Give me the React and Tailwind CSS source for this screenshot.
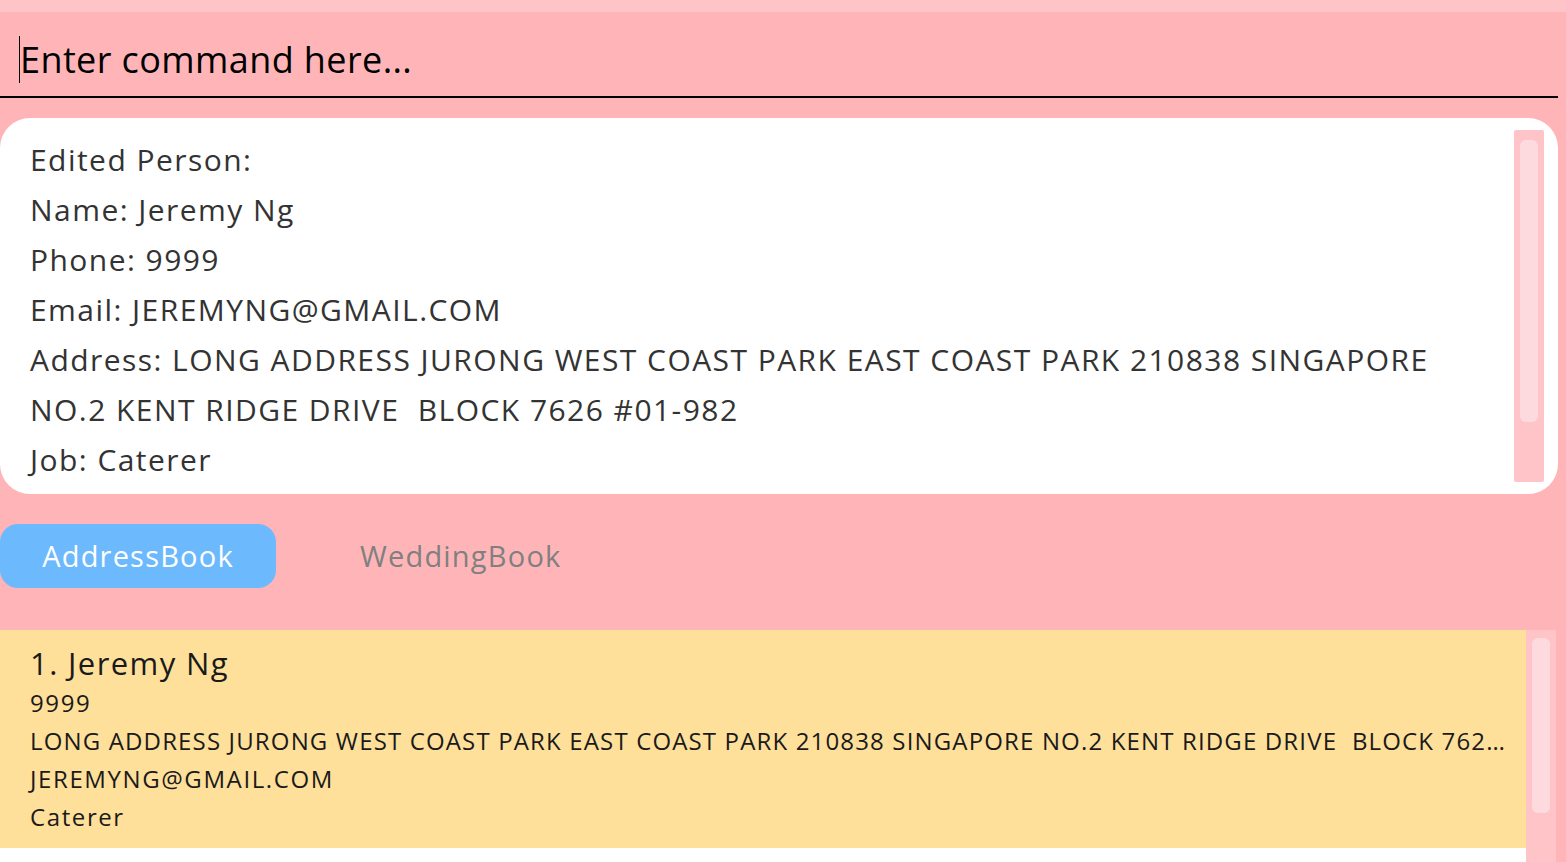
export default function App() {
  const font = { fontFamily: '"Open Sans", "Noto Sans", sans-serif' };
  const lines = [
    "Edited Person:",
    "Name: Jeremy Ng",
    "Phone: 9999",
    "Email: JEREMYNG@GMAIL.COM",
    "Address: LONG ADDRESS JURONG WEST COAST PARK EAST COAST PARK 210838 SINGAPORE",
    "NO.2 KENT RIDGE DRIVE\u00a0 BLOCK 7626 #01-982",
    "Job: Caterer",
  ];
  return (
    <div className="w-[1566px] h-[862px] bg-[#ffb5b8] overflow-hidden flex flex-col font-['Open_Sans',sans-serif]" style={font}>
      <div className="h-[12px] bg-[#ffc4c7] shrink-0" />
      <div className="w-[1558px] h-[86px] shrink-0 border-b-2 border-black flex items-center">
        <div className="ml-[19px] w-[1px] h-[47px] bg-black mt-[10px]" />
        <span className="text-[36px] tracking-[0.4px] text-black leading-none mt-[11px]">Enter command here...</span>
      </div>
      <div className="mt-[20px] w-[1558px] h-[376px] bg-white rounded-[30px] flex shrink-0">
        <div className="flex-1 pl-[30px] pt-[17px] text-[30px] tracking-[1.45px] leading-[50px] text-[#333333]">
          {lines.map((l, i) => (
            <div key={i} className="whitespace-pre">{l}</div>
          ))}
        </div>
        <div className="w-[30px] mt-[12px] mb-[12px] mr-[14px] bg-[#ffc4c8] rounded-[2px] px-[6px] pt-[10px]">
          <div className="h-[282px] bg-[#fddadd] rounded-[6px]" />
        </div>
      </div>
      <div className="mt-[30px] h-[64px] flex items-center shrink-0">
        <div className="w-[276px] h-[64px] bg-[#6cb9fe] rounded-[18px] flex items-center justify-center text-white text-[29px] tracking-[1.2px]">
          AddressBook
        </div>
        <div className="ml-[84px] text-[29px] tracking-[1.2px] text-[#808080]">WeddingBook</div>
      </div>
      <div className="mt-[42px] flex flex-1 min-h-0">
        <div className="w-[1526px] flex flex-col bg-white">
          <div className="h-[218px] bg-[#ffe09b] pl-[30px] pr-[10px] pt-[13px] text-[#1a1a1a]">
            <div className="text-[31px] tracking-[1.4px] leading-[40px]">1. Jeremy Ng</div>
            <div className="text-[24px] tracking-[1.6px] leading-[38px] mt-[1px]">9999</div>
            <div className="text-[24px] tracking-[1.15px] leading-[38px] whitespace-nowrap">
              LONG ADDRESS JURONG WEST COAST PARK EAST COAST PARK 210838 SINGAPORE NO.2 KENT RIDGE DRIVE&nbsp; BLOCK 762…
            </div>
            <div className="text-[24px] tracking-[1.6px] leading-[38px]">JEREMYNG@GMAIL.COM</div>
            <div className="text-[24px] tracking-[1.6px] leading-[38px]">Caterer</div>
          </div>
        </div>
        <div className="w-[30px] bg-[#ffc4c8] px-[6px] pt-[8px]">
          <div className="h-[175px] bg-[#fddadd] rounded-[6px]" />
        </div>
      </div>
    </div>
  );
}
